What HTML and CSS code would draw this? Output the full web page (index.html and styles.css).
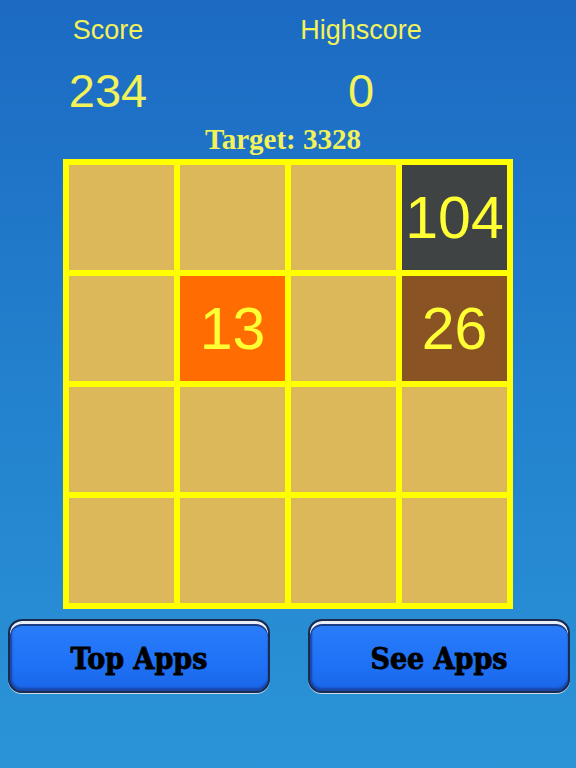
FILE: index.html
```html
<!DOCTYPE html>
<html lang="en">
<head>
  <meta charset="UTF-8" />
  <meta name="viewport" content="width=device-width, initial-scale=1.0">
  <title>13 – Puzzle</title>
  <link rel="stylesheet" href="styles.css">
</head>
<body>
  <div class="screen">
    <div class="scores">
      <div class="score-box">
        <div class="label">Score</div>
        <div class="value">234</div>
      </div>
      <div class="score-box">
        <div class="label">Highscore</div>
        <div class="value">0</div>
      </div>
    </div>

    <div class="target">Target: 3328</div>

    <div class="board">
      <div class="cell"></div>
      <div class="cell"></div>
      <div class="cell"></div>
      <div class="cell tile-104">104</div>

      <div class="cell"></div>
      <div class="cell tile-13">13</div>
      <div class="cell"></div>
      <div class="cell tile-26">26</div>

      <div class="cell"></div>
      <div class="cell"></div>
      <div class="cell"></div>
      <div class="cell"></div>

      <div class="cell"></div>
      <div class="cell"></div>
      <div class="cell"></div>
      <div class="cell"></div>
    </div>

    <div class="buttons">
      <button class="app-btn">Top Apps</button>
      <button class="app-btn">See Apps</button>
    </div>
  </div>
</body>
</html>
```

FILE: styles.css
```css
html, body {
  margin: 0;
  padding: 0;
  height: 100%;
}
body {
  background: linear-gradient(to bottom, #1c6ac3 0%, #2381cd 50%, #2a94d7 100%);
  font-family: 'Liberation Sans', Arial, sans-serif;
  color: #f2f25a;
}
.screen {
  width: 576px;
  height: 768px;
  display: flex;
  flex-direction: column;
  align-items: center;
}
.scores {
  display: grid;
  grid-template-columns: 216px 290px;
  width: 506px;
  margin-right: 70px;
  padding-top: 15px;
}
.score-box {
  text-align: center;
}
.label {
  font-size: 27px;
  line-height: 30px;
}
.value {
  font-size: 47px;
  line-height: 50px;
  margin-top: 21px;
}
.target {
  font-family: 'Liberation Serif', 'Times New Roman', serif;
  font-weight: bold;
  font-size: 29px;
  line-height: 30px;
  margin-top: 8px;
  margin-left: -10px;
}
.board {
  margin-top: 5px;
  width: 450px;
  height: 450px;
  box-sizing: border-box;
  padding: 6px;
  background: #ffff00;
  display: grid;
  grid-template-columns: repeat(4, 1fr);
  grid-template-rows: repeat(4, 1fr);
  gap: 6px;
}
.cell {
  background: #ddb85a;
  display: flex;
  align-items: center;
  justify-content: center;
  font-size: 59px;
  color: #ffff33;
}
.tile-104 { background: #404343; }
.tile-13 { background: #ff6c02; }
.tile-26 { background: #8a5324; }
.buttons {
  display: flex;
  gap: 38px;
  margin-top: 10px;
  margin-left: 2px;
}
.app-btn {
  width: 262px;
  height: 74px;
  border: 2px solid #1b2a4e;
  border-radius: 14px;
  background: linear-gradient(to bottom, #2a7df9 0%, #1f72f6 60%, #1a66e8 100%);
  box-shadow: inset 0 3px 0 #e8eef8, inset 0 5px 0 #1b3d86, inset 0 -3px 2px #1846a8, inset 2px 0 2px #1846a8, 0 1px 0 #d0ddee;
  font-family: 'DejaVu Serif', Georgia, serif;
  font-weight: bold;
  font-stretch: condensed;
  font-size: 30px;
  -webkit-text-stroke: 0.8px #000000;
  color: #000000;
  cursor: pointer;
  padding: 4px 0 0;
}
```
